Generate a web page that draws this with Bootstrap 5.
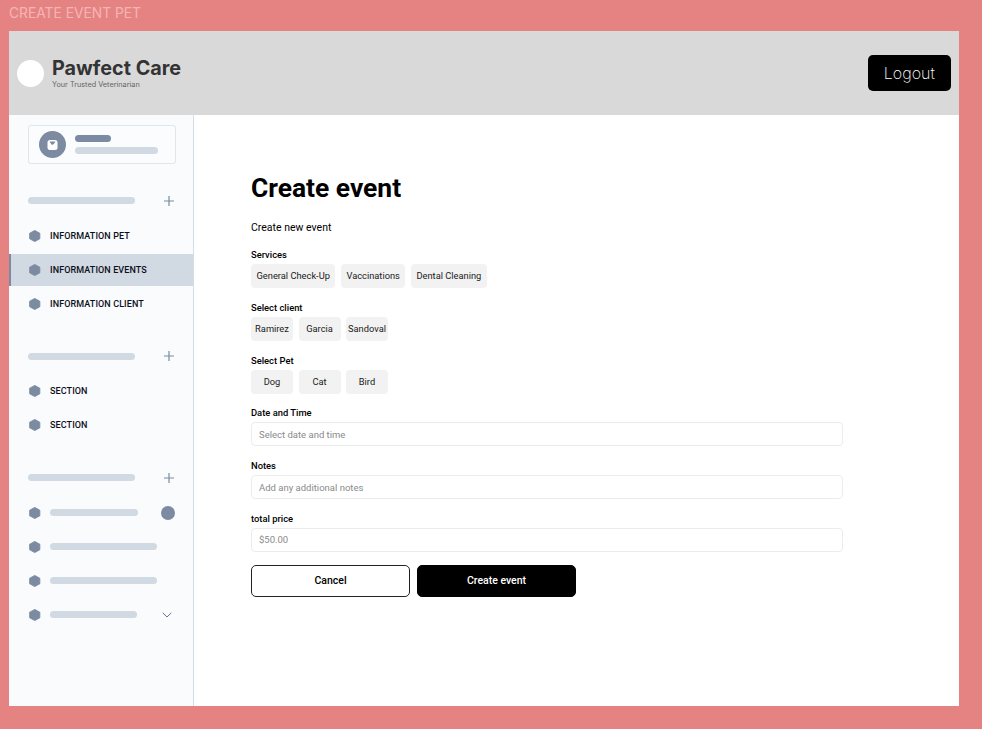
<!DOCTYPE html>
<html lang="en">
<head>
  <meta charset="UTF-8" />
  <meta name="viewport" content="width=device-width, initial-scale=1.0"/>
  <title>Create Event Pet</title>

  <!-- Bootstrap CSS -->
  <link href="https://cdn.jsdelivr.net/npm/bootstrap@5.3.0/dist/css/bootstrap.min.css" rel="stylesheet">

  <style>
    html, body { height: 100%; }
    body {
      background-color: #e58383;
      font-family: "Roboto", "Liberation Sans", sans-serif;
      overflow: hidden;
    }
    .frame-title {
      height: 31px;
      padding: 5px 0 0 9px;
      font-family: "Inter", "Liberation Sans", sans-serif;
      font-size: 13.8px;
      line-height: 17px;
      color: #f5b5b5;
    }
    .app-frame {
      width: 950px;
      height: 675px;
      margin-left: 9px;
      background: #fff;
    }
    .top-bar {
      height: 84px;
      background: #d9d9d9;
      padding: 0 8px;
      font-family: "Inter", "Liberation Sans", sans-serif;
    }
    .logo-dot {
      width: 27px;
      height: 27px;
      background: #fff;
      border-radius: 50%;
    }
    .brand-name {
      font-size: 19.8px;
      font-weight: 700;
      line-height: 24px;
      color: #333;
    }
    .brand-tag {
      font-size: 7.3px;
      line-height: 10px;
      color: #666;
    }
    .logout-btn {
      width: 83.5px;
      height: 36px;
      background: #000;
      color: #fff;
      font-size: 16px;
      font-weight: 250;
      border-radius: 5px;
      border: 0;
    }
    .side-bar {
      width: 185px;
      background: #f9fbfd;
      border-right: 1px solid #d6dde5;
      padding-top: 10px;
    }
    .user-box {
      width: 148.5px;
      height: 39px;
      margin-left: 18.5px;
      background: #fbfcfd;
      border: 1px solid #dfe5ec;
      border-radius: 3px;
      padding-left: 10px;
      gap: 9px;
    }
    .user-pic {
      width: 27px;
      height: 27px;
      background: #7c8ba1;
      border-radius: 50%;
    }
    .user-lines { gap: 5.5px; }
    .pill-dark { height: 7px; width: 36.5px; background: #7c8ba1; border-radius: 4px; }
    .pill { height: 7px; background: #d1d9e3; border-radius: 4px; }
    .group-head {
      height: 34px;
      padding: 0 19px 0 18.5px;
      margin: 19.5px 0 2px;
    }
    .nav-row {
      height: 32px;
      margin-bottom: 2px;
      padding-left: 20px;
      gap: 9.5px;
      font-size: 9px;
      font-weight: 500;
      color: #0b0f19;
      letter-spacing: .1px;
    }
    .nav-row span { padding-top: 2px; }
    .nav-row.is-active {
      background: #d1d9e3;
      border-left: 2px solid #7c8ba1;
      padding-left: 18px;
    }
    .hex {
      width: 11.5px;
      height: 12px;
      fill: #7c8ba1;
      stroke: #7c8ba1;
      stroke-width: 1;
      stroke-linejoin: round;
      flex: none;
    }
    .nav-dot { width: 14px; height: 14px; background: #7c8ba1; border-radius: 50%; margin: 0 2.500px 0 auto; }
    .nav-chev { margin: 0 5px 0 auto; }
    .main-pane { padding: 56px 0 0 57px; }
    .main-form { width: 591.5px; color: #000; }
    .page-title {
      font-size: 26.4px;
      font-weight: 700;
      line-height: 32px;
      margin: 1px 0 0;
    }
    .page-sub { font-size: 10.500px; line-height: 12px; margin: 18px 0 15px; }
    .field-label {
      display: block;
      font-size: 9.400px;
      font-weight: 500;
      line-height: 11px;
      margin-bottom: 4px;
    }
    .field-block { height: 52.8px; }
    .chip-row { gap: 5.5px; }
    .chip {
      height: 24px;
      min-width: 42px;
      padding: 0 2px;
      background: #f2f2f2;
      border: 0;
      border-radius: 4px;
      font-size: 9.300px;
      color: #1a1a1a;
    }
    .chip.chip-wide { padding: 0 5.5px; }
    .text-field {
      height: 24px;
      min-height: 0;
      border: 1px solid #ececec;
      border-radius: 4px;
      padding: 0 7px;
      font-size: 9.500px;
      box-shadow: none;
    }
    .text-field::placeholder { color: #8a8a8a; opacity: 1; }
    .form-actions { gap: 7px; margin-top: -.5px; }
    .cancel-btn, .submit-btn {
      height: 32px;
      width: 159px;
      font-size: 10.500px;
      font-weight: 500;
      border-radius: 5px;
      padding: 0;
    }
    .cancel-btn { background: #fff; border: 1px solid #222; color: #000; }
    .submit-btn { background: #000; border: 1px solid #000; color: #fff; }
  </style>
</head>
<body>

  <div class="frame-title">CREATE EVENT PET</div>

  <div class="app-frame d-flex flex-column">

    <!-- Header -->
    <header class="top-bar d-flex align-items-center justify-content-between">
      <div class="d-flex align-items-center gap-2">
        <div class="logo-dot"></div>
        <div>
          <div class="brand-name">Pawfect Care</div>
          <div class="brand-tag">Your Trusted Veterinarian</div>
        </div>
      </div>
      <button class="logout-btn" type="button">Logout</button>
    </header>

    <div class="d-flex flex-grow-1">

      <!-- Sidebar -->
      <aside class="side-bar">
        <div class="user-box d-flex align-items-center">
          <div class="user-pic d-flex align-items-center justify-content-center">
            <svg width="11" height="10" viewBox="0 0 11 10"><rect x=".5" width="10" height="10" rx="2.500" fill="#fff"/><path d="M2.500 1.500h6L6.800 4 5 5 3.800 3.500z" fill="#7c8ba1"/></svg>
          </div>
          <div class="user-lines d-flex flex-column">
            <div class="pill-dark"></div>
            <div class="pill" style="width:83px"></div>
          </div>
        </div>

        <div class="group-head d-flex align-items-center justify-content-between">
          <div class="pill" style="width:107.5px"></div>
          <svg width="10" height="10" viewBox="0 0 10 10"><path d="M5 0v10M0 5h10" stroke="#7c8ba1" stroke-width="1.200" fill="none"/></svg>
        </div>
        <div class="nav-row d-flex align-items-center"><svg class="hex" viewBox="-.5 -.5 12 13"><path d="M5.500 0 11 3v6l-5.500 3L0 9V3z"/></svg><span>INFORMATION PET</span></div>
        <div class="nav-row is-active d-flex align-items-center"><svg class="hex" viewBox="-.5 -.5 12 13"><path d="M5.500 0 11 3v6l-5.500 3L0 9V3z"/></svg><span>INFORMATION EVENTS</span></div>
        <div class="nav-row d-flex align-items-center"><svg class="hex" viewBox="-.5 -.5 12 13"><path d="M5.500 0 11 3v6l-5.500 3L0 9V3z"/></svg><span>INFORMATION CLIENT</span></div>

        <div class="group-head d-flex align-items-center justify-content-between">
          <div class="pill" style="width:107.5px"></div>
          <svg width="10" height="10" viewBox="0 0 10 10"><path d="M5 0v10M0 5h10" stroke="#7c8ba1" stroke-width="1.200" fill="none"/></svg>
        </div>
        <div class="nav-row d-flex align-items-center"><svg class="hex" viewBox="-.5 -.5 12 13"><path d="M5.500 0 11 3v6l-5.500 3L0 9V3z"/></svg><span>SECTION</span></div>
        <div class="nav-row d-flex align-items-center"><svg class="hex" viewBox="-.5 -.5 12 13"><path d="M5.500 0 11 3v6l-5.500 3L0 9V3z"/></svg><span>SECTION</span></div>

        <div class="group-head d-flex align-items-center justify-content-between">
          <div class="pill" style="width:107.5px"></div>
          <svg width="10" height="10" viewBox="0 0 10 10"><path d="M5 0v10M0 5h10" stroke="#7c8ba1" stroke-width="1.200" fill="none"/></svg>
        </div>
        <div class="nav-row d-flex align-items-center pe-3"><svg class="hex" viewBox="-.5 -.5 12 13"><path d="M5.500 0 11 3v6l-5.500 3L0 9V3z"/></svg><div class="pill" style="width:88px"></div><div class="nav-dot"></div></div>
        <div class="nav-row d-flex align-items-center"><svg class="hex" viewBox="-.5 -.5 12 13"><path d="M5.500 0 11 3v6l-5.500 3L0 9V3z"/></svg><div class="pill" style="width:106.5px"></div></div>
        <div class="nav-row d-flex align-items-center"><svg class="hex" viewBox="-.5 -.5 12 13"><path d="M5.500 0 11 3v6l-5.500 3L0 9V3z"/></svg><div class="pill" style="width:106.5px"></div></div>
        <div class="nav-row d-flex align-items-center pe-3"><svg class="hex" viewBox="-.5 -.5 12 13"><path d="M5.500 0 11 3v6l-5.500 3L0 9V3z"/></svg><div class="pill" style="width:86.5px"></div><svg class="nav-chev" width="10" height="6" viewBox="0 0 10 6"><path d="M.7.8 5 5 9.300.8" stroke="#64748b" fill="none"/></svg></div>
      </aside>

      <!-- Main form -->
      <main class="main-pane flex-grow-1">
        <form class="main-form">
          <h1 class="page-title">Create event</h1>
          <p class="page-sub">Create new event</p>

          <div class="field-block">
            <span class="field-label">Services</span>
            <div class="chip-row d-flex">
              <button type="button" class="chip chip-wide">General Check-Up</button>
              <button type="button" class="chip chip-wide">Vaccinations</button>
              <button type="button" class="chip chip-wide">Dental Cleaning</button>
            </div>
          </div>
          <div class="field-block">
            <span class="field-label">Select client</span>
            <div class="chip-row d-flex">
              <button type="button" class="chip">Ramirez</button>
              <button type="button" class="chip">Garcia</button>
              <button type="button" class="chip">Sandoval</button>
            </div>
          </div>
          <div class="field-block">
            <span class="field-label">Select Pet</span>
            <div class="chip-row d-flex">
              <button type="button" class="chip">Dog</button>
              <button type="button" class="chip">Cat</button>
              <button type="button" class="chip">Bird</button>
            </div>
          </div>
          <div class="field-block">
            <label class="field-label">Date and Time</label>
            <input class="form-control text-field" type="text" placeholder="Select date and time">
          </div>
          <div class="field-block">
            <label class="field-label">Notes</label>
            <input class="form-control text-field" type="text" placeholder="Add any additional notes">
          </div>
          <div class="field-block">
            <label class="field-label">total price</label>
            <input class="form-control text-field" type="text" placeholder="$50.00">
          </div>
          <div class="form-actions d-flex">
            <button type="button" class="cancel-btn">Cancel</button>
            <button type="submit" class="submit-btn">Create event</button>
          </div>
        </form>
      </main>
    </div>
  </div>

  <!-- Bootstrap JS -->
  <script src="https://cdn.jsdelivr.net/npm/bootstrap@5.3.0/dist/js/bootstrap.bundle.min.js"></script>
</body>
</html>
